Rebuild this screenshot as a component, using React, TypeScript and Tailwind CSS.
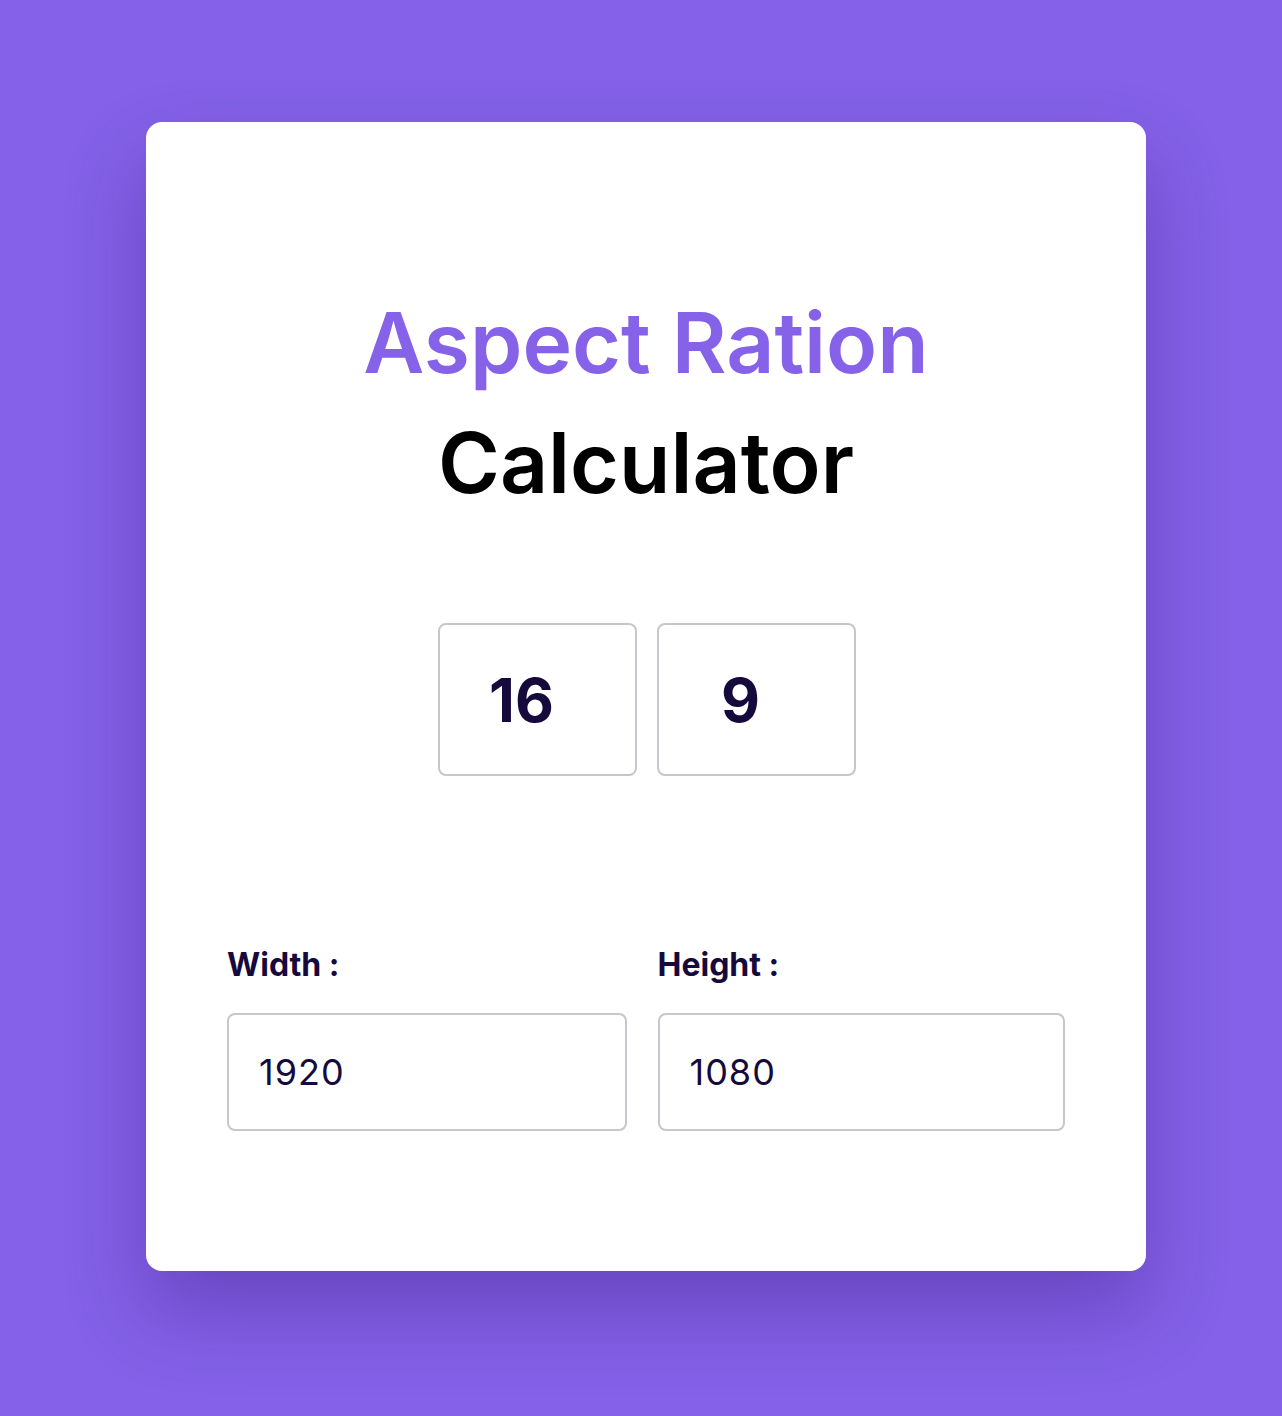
import React from "react";

const App = () => {
  const ratio = ["16", "9"];
  const fields = [
    { label: "Width :", value: "1920", w: "w-[400px]" },
    { label: "Height :", value: "1080", w: "w-[408px]" },
  ];

  return (
    <div className="min-h-[1416px] bg-[#8461e8] flex justify-center pt-[122px] pl-[10px] font-['Inter',sans-serif]">
      <div className="w-[1000px] h-[1149px] bg-white rounded-2xl shadow-[0_40px_80px_rgba(40,10,100,0.3)] flex flex-col items-center px-[81px] pt-[161px]">
        <h1 className="text-center text-[84px] leading-[120px] font-semibold text-black">
          <span className="text-[#8662e9]">Aspect Ration</span>
          <br />
          Calculator
        </h1>

        <div className="flex gap-5 mt-[100px] ml-[2px]">
          {ratio.map((r) => (
            <div
              key={r}
              className="w-[199px] h-[153px] border-2 border-[#c6c6cc] rounded-lg flex items-center justify-center pr-8 text-[60px] font-bold text-[#160a3c]"
            >
              {r}
            </div>
          ))}
        </div>

        <div className="self-stretch flex gap-[31px] mt-[169px]">
          {fields.map((f) => (
            <div key={f.label} className={f.w}>
              <label className="block text-[32px] leading-[40px] font-bold text-[#160a3c]">
                {f.label}
              </label>
              <div className="mt-[28px] h-[118px] border-2 border-[#c6c6cc] rounded-lg flex items-center pl-[30px] text-[36px] tracking-[1px] text-[#160a3c]">
                {f.value}
              </div>
            </div>
          ))}
        </div>
      </div>
    </div>
  );
};

export default App;
